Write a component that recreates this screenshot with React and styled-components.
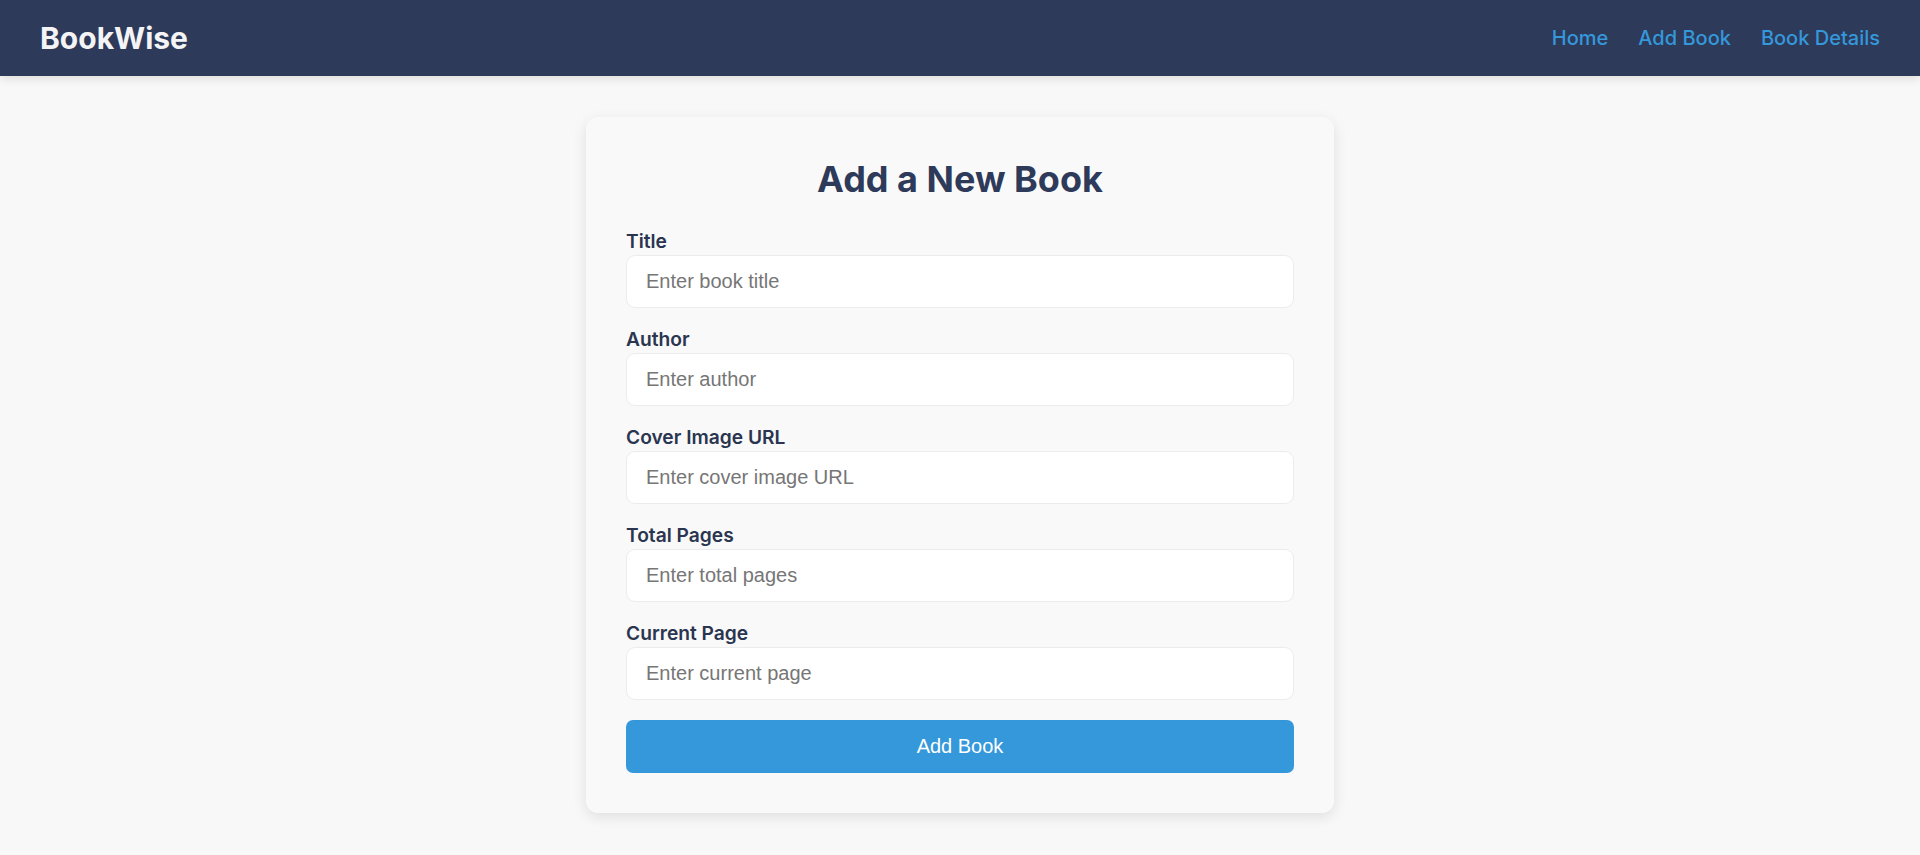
import React from "react";
import styled, { createGlobalStyle } from "styled-components";

const GlobalStyle = createGlobalStyle`
  html, body { margin: 0; padding: 0; }
  body {
    background: #f8f8f8;
    font-family: Inter, "Noto Sans", sans-serif;
  }
  * { box-sizing: border-box; }
`;

const Header = styled.header`
  height: 76px;
  background: #2e3a5a;
  display: flex;
  align-items: center;
  justify-content: space-between;
  padding: 0 40px;
  box-shadow: 0 2px 10px rgba(0, 0, 0, 0.12);
`;

const Logo = styled.div`
  font-family: Inter, sans-serif;
  font-weight: 700;
  font-size: 30px;
  color: #f4f4f6;
`;

const Nav = styled.nav`
  display: flex;
  gap: 30px;
`;

const NavLink = styled.a`
  font-family: Inter, sans-serif;
  font-size: 20px;
  font-weight: 500;
  color: #3498db;
  text-decoration: none;
  cursor: pointer;
`;

const Main = styled.main`
  display: flex;
  justify-content: center;
  padding: 41px 0 40px;
`;

const Card = styled.form`
  width: 748px;
  background: #f9f9f9;
  border-radius: 12px;
  padding: 40px;
  box-shadow: 0 4px 14px rgba(0, 0, 0, 0.1);
  display: flex;
  flex-direction: column;
`;

const Heading = styled.h2`
  margin: 0 0 29px;
  text-align: center;
  font-family: Inter, sans-serif;
  font-size: 36px;
  font-weight: 700;
  color: #2e3a5a;
`;

const Group = styled.div`
  display: flex;
  flex-direction: column;
  gap: 2px;
  margin-bottom: 20px;
`;

const Label = styled.label`
  font-family: Inter, sans-serif;
  font-size: 19.2px;
  font-weight: 600;
  line-height: 23px;
  color: #2a3550;
`;

const Input = styled.input`
  font-family: "Liberation Sans", Arial, sans-serif;
  font-size: 20px;
  height: 53px;
  padding: 0 19px;
  border: 1px solid #ececec;
  border-radius: 9px;
  background: #fff;
  color: #333;
  outline: none;
  &::placeholder { color: #767676; }
`;

const Button = styled.button`
  height: 53px;
  border: none;
  border-radius: 7px;
  background: #3498db;
  color: #fff;
  font-family: "Liberation Sans", Arial, sans-serif;
  font-size: 20px;
  cursor: pointer;
`;

const fields = [
  { label: "Title", placeholder: "Enter book title" },
  { label: "Author", placeholder: "Enter author" },
  { label: "Cover Image URL", placeholder: "Enter cover image URL" },
  { label: "Total Pages", placeholder: "Enter total pages" },
  { label: "Current Page", placeholder: "Enter current page" },
];

export default function App() {
  return (
    <>
      <GlobalStyle />
      <Header>
        <Logo>BookWise</Logo>
        <Nav>
          <NavLink>Home</NavLink>
          <NavLink>Add Book</NavLink>
          <NavLink>Book Details</NavLink>
        </Nav>
      </Header>
      <Main>
        <Card onSubmit={(e) => e.preventDefault()}>
          <Heading>Add a New Book</Heading>
          {fields.map((f) => (
            <Group key={f.label}>
              <Label>{f.label}</Label>
              <Input placeholder={f.placeholder} />
            </Group>
          ))}
          <Button type="submit">Add Book</Button>
        </Card>
      </Main>
    </>
  );
}
